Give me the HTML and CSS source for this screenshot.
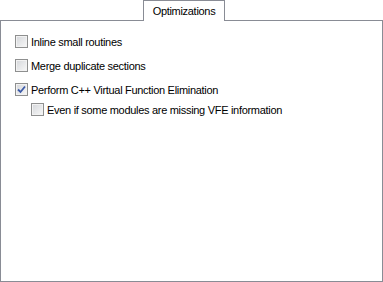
FILE: index.html
```html
<!DOCTYPE html>
<html lang="en">
<head>
    <meta charset="UTF-8">
    <title>Optimizations</title>
    <link rel="stylesheet" href="styles.css">
</head>
<body>

    <div class="tab-strip">
        <div class="tab">Optimizations</div>
    </div>

    <div class="tab-page">
        <label class="option">
            <span class="box"></span>
            <span>Inline small routines</span>
        </label>
        <label class="option">
            <span class="box"></span>
            <span>Merge duplicate sections</span>
        </label>
        <label class="option option-tight">
            <span class="box checked">
                <svg width="9" height="9" viewBox="0 0 9 9"><path d="M1 4.5 L3.5 7 L8 1.5" fill="none" stroke="#3c5aa8" stroke-width="1.8"/></svg>
            </span>
            <span>Perform C++ Virtual Function Elimination</span>
        </label>
        <label class="option sub">
            <span class="box"></span>
            <span>Even if some modules are missing VFE information</span>
        </label>
    </div>

</body>
</html>
```

FILE: styles.css
```css
body {
    margin: 0;
    background-color: #ffffff;
    font-family: 'Liberation Sans', Arial, sans-serif;
    font-size: 11px;
    letter-spacing: -0.3px;
    color: #000000;
}

.tab-strip {
    display: flex;
    padding-left: 143px;
    height: 20px;
}

.tab {
    position: relative;
    z-index: 1;
    width: 80px;
    height: 20px;
    border: 1px solid #898c95;
    border-bottom: none;
    background-color: #ffffff;
    text-align: center;
    line-height: 20px;
}

.tab-page {
    width: 383px;
    height: 262px;
    box-sizing: border-box;
    border: 1px solid #898c95;
    padding: 14px 0 0 14px;
}

.option {
    display: flex;
    align-items: center;
    gap: 3px;
    height: 13px;
    margin-bottom: 11px;
}

.option-tight {
    margin-bottom: 7px;
}

.option.sub {
    padding-left: 16px;
}

.box {
    display: flex;
    align-items: center;
    justify-content: center;
    width: 13px;
    height: 13px;
    box-sizing: border-box;
    border: 1px solid #8e8f8f;
    background: linear-gradient(135deg, #d4d6da, #f8f8f8);
    box-shadow: inset 0 0 0 1px #f2f2f2;
}
```
